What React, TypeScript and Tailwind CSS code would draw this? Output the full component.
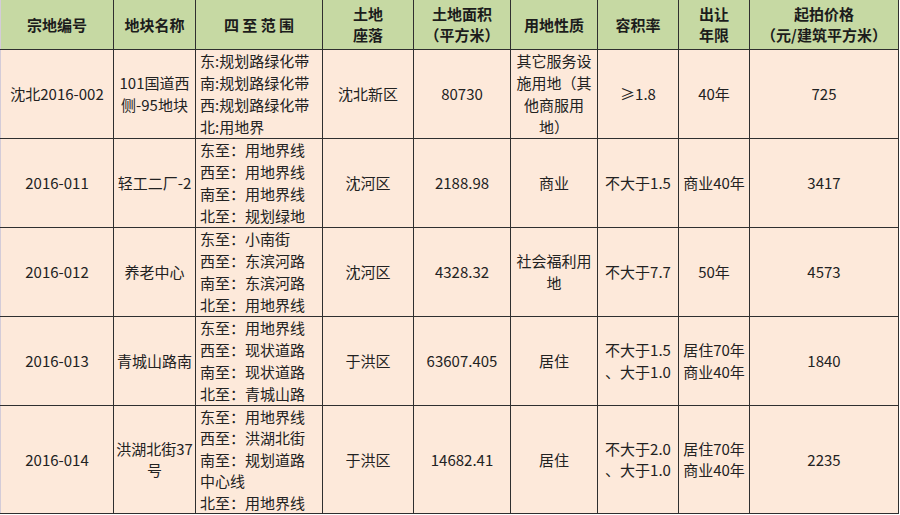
const font = { fontFamily: '"Noto Sans CJK SC", "Noto Sans", sans-serif' };

type Row = {
  code: string;
  name: string;
  bounds: string[];
  district: string;
  area: string;
  usage: string;
  ratio: string[];
  term: string[];
  price: string;
  h: string;
};

const rows: Row[] = [
  {
    code: "沈北2016-002",
    name: "101国道西侧-95地块",
    bounds: ["东:规划路绿化带", "南:规划路绿化带", "西:规划路绿化带", "北:用地界"],
    district: "沈北新区",
    area: "80730",
    usage: "其它服务设施用地（其他商服用地）",
    ratio: ["≥1.8"],
    term: ["40年"],
    price: "725",
    h: "h-[88px]",
  },
  {
    code: "2016-011",
    name: "轻工二厂-2",
    bounds: ["东至：用地界线", "西至：用地界线", "南至：用地界线", "北至：规划绿地"],
    district: "沈河区",
    area: "2188.98",
    usage: "商业",
    ratio: ["不大于1.5"],
    term: ["商业40年"],
    price: "3417",
    h: "h-[89px]",
  },
  {
    code: "2016-012",
    name: "养老中心",
    bounds: ["东至：小南街", "西至：东滨河路", "南至：东滨河路", "北至：用地界线"],
    district: "沈河区",
    area: "4328.32",
    usage: "社会福利用地",
    ratio: ["不大于7.7"],
    term: ["50年"],
    price: "4573",
    h: "h-[87px]",
  },
  {
    code: "2016-013",
    name: "青城山路南",
    bounds: ["东至：用地界线", "西至：现状道路", "南至：现状道路", "北至：青城山路"],
    district: "于洪区",
    area: "63607.405",
    usage: "居住",
    ratio: ["不大于1.5", "、大于1.0"],
    term: ["居住70年", "商业40年"],
    price: "1840",
    h: "h-[88px]",
  },
  {
    code: "2016-014",
    name: "洪湖北街37号",
    bounds: ["东至：用地界线", "西至：洪湖北街", "南至：规划道路", "中心线", "北至：用地界线"],
    district: "于洪区",
    area: "14682.41",
    usage: "居住",
    ratio: ["不大于2.0", "、大于1.0"],
    term: ["居住70年", "商业40年"],
    price: "2235",
    h: "h-[108px] leading-[21.6px]",
  },
];

const headers: string[][] = [
  ["宗地编号"],
  ["地块名称"],
  ["四 至 范 围"],
  ["土地", "座落"],
  ["土地面积", "（平方米）"],
  ["用地性质"],
  ["容积率"],
  ["出让", "年限"],
  ["起拍价格", "（元/建筑平方米）"],
];

const widths = [113, 82, 127, 91, 97, 87, 81, 71, 149];

const cell = "border border-[#2f2f2f] align-middle text-center p-0";

export default function App() {
  return (
    <div className="w-[900px] h-[515px] overflow-hidden bg-white" style={font}>
      <table className="table-fixed border-collapse w-[899px] text-[15px] leading-[22px] text-[#222]">
        <colgroup>
          {widths.map((w, i) => (
            <col key={i} style={{ width: w }} />
          ))}
        </colgroup>
        <thead>
          <tr className="h-[49px] bg-[#c6d9a3]">
            {headers.map((lines, i) => (
              <th
                key={i}
                className={`${cell} border-t-0 font-bold leading-[21px] text-[#1c1c1c] ${i === 0 ? "border-l-[#d4ccd8]" : ""}`}
              >
                {lines.map((l) => (
                  <div key={l}>{l}</div>
                ))}
              </th>
            ))}
          </tr>
        </thead>
        <tbody className="bg-[#fde9da]">
          {rows.map((r) => (
            <tr key={r.code} className={r.h}>
              <td className={`${cell} border-l-[#d4ccd8]`}>{r.code}</td>
              <td className={cell}>{r.name}</td>
              <td className={`${cell} text-left pl-[4px]`}>
                {r.bounds.map((b) => (
                  <div key={b}>{b}</div>
                ))}
              </td>
              <td className={cell}>{r.district}</td>
              <td className={cell}>{r.area}</td>
              <td className={`${cell} px-[5px]`}>{r.usage}</td>
              <td className={cell}>
                {r.ratio.map((l) => (
                  <div key={l}>{l}</div>
                ))}
              </td>
              <td className={cell}>
                {r.term.map((l) => (
                  <div key={l}>{l}</div>
                ))}
              </td>
              <td className={cell}>{r.price}</td>
            </tr>
          ))}
        </tbody>
      </table>
    </div>
  );
}
